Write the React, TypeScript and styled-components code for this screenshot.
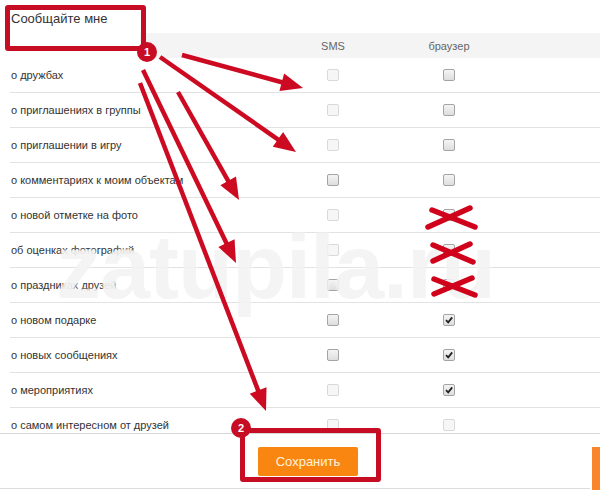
import styled, { createGlobalStyle } from 'styled-components';

const GlobalStyle = createGlobalStyle`
  html, body {
    margin: 0;
    padding: 0;
    background: #fff;
  }
  body {
    font-family: 'Liberation Sans', Arial, sans-serif;
  }
`;

const Page = styled.div`
  position: relative;
  width: 600px;
  height: 490px;
  overflow: hidden;
  background: #fff;
  color: #333;
`;

const Title = styled.div`
  height: 33px;
  box-sizing: border-box;
  padding: 11px 0 0 11px;
  font-size: 13px;
  line-height: 15px;
  color: #333;
`;

const Grid = styled.div`
  display: grid;
  grid-template-columns: 263px 120px 112px 1fr;
  align-items: center;
  padding-left: 10px;
`;

const HeadRow = styled(Grid)`
  height: 25px;
  background: linear-gradient(to right, #fff 140px, #f4f4f4 140px);
  font-size: 11px;
  color: #666;
`;

const HeadCell = styled.div`
  text-align: center;
`;

const Body = styled.div`
  height: 375px;
  overflow: hidden;
`;

const Row = styled(Grid)`
  height: 35px;
  box-sizing: border-box;
  padding-left: 0;
  margin-left: 10px;
  border-bottom: 1px solid #e2e2e2;
`;

const Label = styled.div`
  padding-left: 1px;
  font-size: 11px;
  color: #333;
`;

const Cell = styled.div`
  display: flex;
  justify-content: center;
`;

const Box = styled.span<{ $off?: boolean }>`
  position: relative;
  display: block;
  width: 10px;
  height: 10px;
  border-radius: 2px;
  border: 1px solid ${({ $off }) => ($off ? '#d9d9d9' : '#a4a4a4')};
  background: ${({ $off }) =>
    $off ? '#f6f6f6' : 'linear-gradient(#f4f4f4, #dedede)'};
`;

const Footer = styled.div`
  height: 57px;
  box-sizing: border-box;
  border-top: 1px solid #d6d6d6;
  display: flex;
  align-items: flex-start;
  padding: 13px 0 0 258px;
  overflow: hidden;
  position: relative;
  &::after {
    content: '';
    position: absolute;
    left: 0;
    right: 10px;
    bottom: 1px;
    border-bottom: 1px solid #dcdcdc;
  }
`;

const SaveButton = styled.button`
  width: 100px;
  height: 29px;
  border: none;
  border-radius: 2px;
  background: #fa8612;
  color: #fff3d8;
  font-family: 'Liberation Sans', Arial, sans-serif;
  font-size: 13px;
  padding: 0;
`;

const CutButton = styled.div`
  margin-left: auto;
  margin-right: -92px;
  width: 100px;
  height: 44px;
  background: #f7872a;
`;

const Frame = styled.div<{ $x: number; $y: number; $w: number; $h: number }>`
  position: absolute;
  left: ${({ $x }) => $x}px;
  top: ${({ $y }) => $y}px;
  width: ${({ $w }) => $w}px;
  height: ${({ $h }) => $h}px;
  box-sizing: border-box;
  border: 5px solid #c70d23;
  border-radius: 3px;
`;

const Badge = styled.div<{ $x: number; $y: number }>`
  position: absolute;
  left: ${({ $x }) => $x - 10}px;
  top: ${({ $y }) => $y - 10}px;
  width: 20px;
  height: 20px;
  border-radius: 50%;
  background: #c70d23;
  color: #fff;
  font-size: 11px;
  font-weight: bold;
  line-height: 20px;
  text-align: center;
`;

// watermark sits over the table, very faint
const Watermark = styled.div`
  position: absolute;
  left: 56px;
  top: 222px;
  font-size: 90px;
  font-weight: bold;
  line-height: 1;
  letter-spacing: -1px;
  color: rgba(205, 205, 205, 0.22);
  text-shadow: 0 0 2px rgba(255, 255, 255, 0.9);
  pointer-events: none;
`;

const Overlay = styled.svg`
  position: absolute;
  left: 0;
  top: 0;
  pointer-events: none;
`;

type Mark = 'off' | 'on' | 'checked';
const rows: [string, Mark, Mark][] = [
  ['о дружбах', 'off', 'on'],
  ['о приглашениях в группы', 'off', 'on'],
  ['о приглашении в игру', 'off', 'on'],
  ['о комментариях к моим объектам', 'on', 'on'],
  ['о новой отметке на фото', 'off', 'on'],
  ['об оценках фотографий', 'off', 'on'],
  ['о праздниках друзей', 'on', 'on'],
  ['о новом подарке', 'on', 'checked'],
  ['о новых сообщениях', 'on', 'checked'],
  ['о мероприятиях', 'off', 'checked'],
  ['о самом интересном от друзей', 'off', 'off'],
];

const Check = ({ mark }: { mark: Mark }) => (
  <Box $off={mark === 'off'}>
    {mark === 'checked' && (
      <svg width="10" height="10" viewBox="0 0 10 10" style={{ position: 'absolute', left: 0, top: 0 }}>
        <path d="M2 5.2 L4.2 7.4 L8.2 2.4" fill="none" stroke="#222" strokeWidth="1.8" />
      </svg>
    )}
  </Box>
);

const arrows = [
  [182, 55, 303, 88],
  [160, 57, 296, 152],
  [178, 92, 239, 200],
  [143, 70, 236, 263],
  [140, 83, 266, 411],
];

const Arrow = ({ a }: { a: number[] }) => {
  const [x1, y1, x2, y2] = a;
  const dx = x2 - x1;
  const dy = y2 - y1;
  const len = Math.hypot(dx, dy);
  const ux = dx / len;
  const uy = dy / len;
  const bx = x2 - ux * 22;
  const by = y2 - uy * 22;
  const head = `${x2},${y2} ${bx - uy * 9},${by + ux * 9} ${bx + uy * 9},${by - ux * 9}`;
  return (
    <g>
      <line x1={x1} y1={y1} x2={bx + ux * 2} y2={by + uy * 2} stroke="#cc0a22" strokeWidth="4.5" />
      <polygon points={head} fill="#cc0a22" />
    </g>
  );
};

const crosses = [
  [432, 210, 475, 227, 428, 227, 470, 208],
  [433, 245, 473, 262, 433, 261, 470, 244],
  [434, 279, 475, 295, 434, 294, 472, 278],
];

export default function App() {
  return (
    <>
      <GlobalStyle />
      <Page>
        <Title>Сообщайте мне</Title>
        <HeadRow>
          <div />
          <HeadCell>SMS</HeadCell>
          <HeadCell>браузер</HeadCell>
        </HeadRow>
        <Body>
          {rows.map(([label, sms, web]) => (
            <Row key={label}>
              <Label>{label}</Label>
              <Cell>
                <Check mark={sms} />
              </Cell>
              <Cell>
                <Check mark={web} />
              </Cell>
            </Row>
          ))}
        </Body>
        <Footer>
          <SaveButton>Сохранить</SaveButton>
          <CutButton />
        </Footer>

        <Watermark>zatupila.ru</Watermark>

        <Overlay width="600" height="490">
          {arrows.map((a, i) => (
            <Arrow key={i} a={a} />
          ))}
          {crosses.map((c, i) => (
            <g key={i} stroke="#d0021b" strokeWidth="5.5" strokeLinecap="round">
              <line x1={c[0]} y1={c[1]} x2={c[2]} y2={c[3]} />
              <line x1={c[4]} y1={c[5]} x2={c[6]} y2={c[7]} />
            </g>
          ))}
        </Overlay>

        <Frame $x={5} $y={5} $w={141} $h={46} />
        <Frame $x={240} $y={428} $w={141} $h={54} />
        <Badge $x={147} $y={52}>1</Badge>
        <Badge $x={241} $y={428}>2</Badge>
      </Page>
    </>
  );
}
